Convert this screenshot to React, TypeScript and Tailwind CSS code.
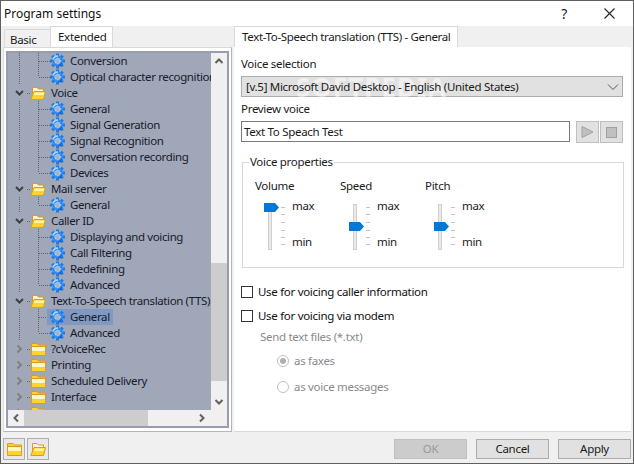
import type { ReactNode } from 'react';

type TreeItem = {
  label: string;
  level: 0 | 1;
  open?: boolean;
  last?: boolean;
  selected?: boolean;
};

const treeItems: TreeItem[] = [
  { label: 'Conversion', level: 1 },
  { label: 'Optical character recognition', level: 1, last: true },
  { label: 'Voice', level: 0, open: true },
  { label: 'General', level: 1 },
  { label: 'Signal Generation', level: 1 },
  { label: 'Signal Recognition', level: 1 },
  { label: 'Conversation recording', level: 1 },
  { label: 'Devices', level: 1, last: true },
  { label: 'Mail server', level: 0, open: true },
  { label: 'General', level: 1, last: true },
  { label: 'Caller ID', level: 0, open: true },
  { label: 'Displaying and voicing', level: 1 },
  { label: 'Call Filtering', level: 1 },
  { label: 'Redefining', level: 1 },
  { label: 'Advanced', level: 1, last: true },
  { label: 'Text-To-Speech translation (TTS)', level: 0, open: true },
  { label: 'General', level: 1, selected: true },
  { label: 'Advanced', level: 1, last: true },
  { label: '?cVoiceRec', level: 0 },
  { label: 'Printing', level: 0 },
  { label: 'Scheduled Delivery', level: 0 },
  { label: 'Interface', level: 0 },
  { label: '', level: 0 },
];

function Gear() {
  const angles = [0, 45, 90, 135, 180, 225, 270, 315];
  return (
    <svg width="15" height="16" viewBox="0 0 15 16" className="shrink-0">
      {angles.map((a) => (
        <rect key={a} x="6" y="0.5" width="3" height="3.5" fill="#1f7ae6" transform={`rotate(${a} 7.5 8)`} />
      ))}
      <circle cx="7.5" cy="8" r="5.4" fill="#2f8df0" />
      <path d="M3 6.5A5 5 0 0 1 8 3" stroke="#a8dcff" strokeWidth="1.4" fill="none" />
      <path d="M12 10A5 5 0 0 1 8 13" stroke="#0f5fc4" strokeWidth="1.2" fill="none" />
      <circle cx="7.5" cy="8" r="2.8" fill="#aab4c8" stroke="#dbe9fb" strokeWidth="1" strokeDasharray="1 1" />
    </svg>
  );
}

function FolderOpen() {
  return (
    <svg width="16" height="16" viewBox="0 0 16 16" className="shrink-0 -ml-px">
      <path d="M2.5 14V2.5h4.5l1.5 1.5h5v4" fill="#fff6d0" stroke="#e09a1a" />
      <path d="M4 6.5h11.5L13.5 14.5H.8z" fill="#ffd32e" stroke="#e09a1a" />
      <path d="M4.6 7.5h9.6l-.6 2.5H3.6z" fill="#fff3a8" />
    </svg>
  );
}

function FolderClosed() {
  return (
    <svg width="15" height="16" viewBox="0 0 15 16" className="shrink-0">
      <path d="M.5 14.5V2.5h5.5l1.5 1.5h7v10.5z" fill="#ffd32e" stroke="#e09a1a" />
      <path d="M1 6h13v4H1z" fill="#fff6c8" />
      <path d="M1 5.5h13.5" stroke="#e09a1a" />
    </svg>
  );
}

function TreeRow({ item }: { item: TreeItem }) {
  if (item.level === 0) {
    return (
      <div className="flex h-4 items-center whitespace-nowrap">
        <svg width="23" height="16" viewBox="0 0 23 16" className="shrink-0">
          {item.open ? (
            <path d="M8 6l3.5 3.5L15 6" stroke="#404040" strokeWidth="2" fill="none" />
          ) : (
            <path d="M9.5 4.5L13 8l-3.5 3.5" stroke="#808080" strokeWidth="2" fill="none" />
          )}
          <path d="M19 8.5h4" stroke="#5c6270" strokeDasharray="1 1" />
        </svg>
        {item.open ? <FolderOpen /> : <FolderClosed />}
        <span className="ml-[5px]">{item.label}</span>
      </div>
    );
  }
  return (
    <div className="flex h-4 items-center whitespace-nowrap">
      <svg width="42" height="16" viewBox="0 0 42 16" className="shrink-0">
        <path d="M11.5 0v16" stroke="#5c6270" strokeDasharray="1 1" />
        <path d={item.last ? 'M30.5 0v8' : 'M30.5 0v16'} stroke="#5c6270" strokeDasharray="1 1" />
        <path d="M31 8.5h11" stroke="#5c6270" strokeDasharray="1 1" />
      </svg>
      <div className={item.selected ? 'flex h-4 items-center -ml-[3px] pl-[3px] pr-[3px] bg-[#7f99c2]' : 'flex h-4 items-center'}>
        <Gear />
        <span className="ml-[5px]">{item.label}</span>
      </div>
    </div>
  );
}

function Chevron({ d }: { d: string }) {
  return (
    <svg width="16" height="16" viewBox="0 0 16 16" className="shrink-0">
      <path d={d} stroke="#606060" strokeWidth="2" fill="none" />
    </svg>
  );
}

function Tree() {
  return (
    <div className="flex flex-col ml-[2px] mr-[2px] mt-[3px] h-[377px] border-2 border-[#979daf] text-[#171b2a] tracking-[-0.38px]">
      <div className="flex h-[357px]">
        <div className="w-[203px] bg-[#a0a7b8] overflow-hidden">
          {treeItems.map((item, i) => (
            <TreeRow key={i} item={item} />
          ))}
        </div>
        <div className="w-4 flex flex-col bg-[#f0f0f0]">
          <Chevron d="M4.5 10L8 6.5l3.5 3.5" />
          <div className="h-[194px]" />
          <div className="h-[118px] bg-[#cdcdcd]" />
          <div className="flex-1" />
          <Chevron d="M4.5 6L8 9.5 11.5 6" />
        </div>
      </div>
      <div className="flex h-4 bg-[#f0f0f0]">
        <Chevron d="M10 4.5L6.5 8l3.5 3.5" />
        <div className="w-[124px] bg-[#cdcdcd]" />
        <div className="w-[46px]" />
        <Chevron d="M6 4.5L9.5 8 6 11.5" />
      </div>
    </div>
  );
}

function LeftPanel() {
  return (
    <div className="w-[233px] flex flex-col shrink-0">
      <div className="flex items-end h-[21px] pl-[3px]">
        <div className="w-[47px] h-[18px] bg-[#f0f0f0] border border-b-0 border-[#d9d9d9] flex items-center pl-[5px] pt-[2px]">Basic</div>
        <div className="w-[63px] h-[21px] bg-white border border-b-0 border-[#d9d9d9] -ml-px flex items-center pl-[7px]">Extended</div>
      </div>
      <div className="ml-[2px] w-[229px] h-[385px] bg-white border border-[#d9d9d9] border-r-[#b4b4b4] border-b-[#b4b4b4]">
        <Tree />
      </div>
    </div>
  );
}

function Slider({ label, top }: { label: string; top: boolean }) {
  const ticks = [4, 11, 19, 27, 34, 41];
  return (
    <div className="w-[85px] flex flex-col">
      <div className="h-4 flex items-center leading-4">{label}</div>
      <div className="flex ml-[9px] mt-[9px] h-[50px]">
        <svg width="24" height="50" viewBox="0 0 24 50" className="shrink-0">
          <rect x="4.5" y="1.5" width="3" height="45" fill="#e7eaea" stroke="#d0d0d0" />
          {ticks.map((t) => (
            <rect key={t} x="17" y={t} width="4" height="1" fill="#c4c4c4" />
          ))}
          <path d={top ? 'M0 0h11l4 4.5-4 4.5H0z' : 'M0 19h11l4 4.5-4 4.5H0z'} fill="#0078d7" />
        </svg>
        <div className="ml-[4px] -mt-[5px] h-[52px] flex flex-col justify-between leading-4">
          <span>max</span>
          <span>min</span>
        </div>
      </div>
    </div>
  );
}

function Check({ children }: { children: ReactNode }) {
  return (
    <div className="flex items-center h-[14px] gap-[5px] text-[#111]">
      <div className="w-3 h-3 border border-[#333] bg-white shrink-0" />
      <span>{children}</span>
    </div>
  );
}

function Radio({ checked, children }: { checked?: boolean; children: ReactNode }) {
  return (
    <div className="flex items-center h-[14px] gap-[5px] ml-[36px] text-[#8a8a8a]">
      <div className="w-3 h-3 rounded-full border border-[#bfbfbf] flex items-center justify-center shrink-0">
        {checked && <div className="w-[6px] h-[6px] rounded-full bg-[#b0b0b0]" />}
      </div>
      <span>{children}</span>
    </div>
  );
}

function RightPanel() {
  return (
    <div className="flex-1 flex flex-col">
      <div className="h-[21px] flex">
        <div className="w-[224px] h-[21px] bg-white border-l border-t border-r border-[#d9d9d9] flex items-center pl-[7px] whitespace-nowrap tracking-[-0.35px]">
          Text-To-Speech translation (TTS) - General
        </div>
      </div>
      <div className="w-[397px] h-[385px] bg-white border-b border-[#d9d9d9] pl-[7px] pr-[8px] pt-[9px] flex flex-col">
        <div className="h-4 leading-4">Voice selection</div>
        <div className="relative mt-[4px] h-[21px] w-[382px] bg-[#e1e1e1] border border-[#adadad] flex items-center pl-[4px]">
          <div className="absolute left-[54px] -top-[3px] text-[26px] font-bold leading-[26px] tracking-[1px] text-white/50 pointer-events-none">
            SOFTPEDIA
          </div>
          <span className="relative">[v.5] Microsoft David Desktop - English (United States)</span>
          <svg width="12" height="8" viewBox="0 0 12 8" className="ml-auto mr-[3px]">
            <path d="M1 1.5l5 5 5-5" stroke="#555" fill="none" />
          </svg>
        </div>
        <div className="h-4 leading-4 mt-[4px]">Preview voice</div>
        <div className="flex mt-[4px] h-[22px]">
          <div className="w-[329px] h-[21px] border border-[#7a7a7a] flex items-center pl-[2px]">Text To Speach Test</div>
          <div className="ml-[6px] w-[23px] h-[22px] bg-[#e1e1e1] border border-[#bfbfbf] flex items-center justify-center">
            <svg width="13" height="12" viewBox="0 0 13 12">
              <path d="M1 .5l11 5.5-11 5.5z" fill="#c0c0c0" stroke="#a0a0a0" />
            </svg>
          </div>
          <div className="ml-px w-[23px] h-[22px] bg-[#e1e1e1] border border-[#bfbfbf] flex items-center justify-center">
            <div className="w-[11px] h-[11px] bg-[#c0c0c0] border border-[#a0a0a0]" />
          </div>
        </div>
        <div className="relative mt-[19px] ml-px w-[382px] h-[106px] border border-[#d9d9d9] pl-[12px] pt-[15px] flex">
          <div className="absolute -top-[8px] left-[6px] bg-white px-px leading-[14px]">Voice properties</div>
          <Slider label="Volume" top />
          <Slider label="Speed" top={false} />
          <Slider label="Pitch" top={false} />
        </div>
        <div className="mt-[17px]">
          <Check>Use for voicing caller information</Check>
        </div>
        <div className="mt-[10px]">
          <Check>Use for voicing via modem</Check>
        </div>
        <div className="ml-[19px] mt-[6px] h-4 leading-4 text-[#8a8a8a]">Send text files (*.txt)</div>
        <div className="mt-[9px]">
          <Radio checked>as faxes</Radio>
        </div>
        <div className="mt-3">
          <Radio>as voice messages</Radio>
        </div>
      </div>
    </div>
  );
}

function Footer() {
  return (
    <div className="h-[30px] flex items-center pl-[2px] pt-[4px]">
      <div className="w-[22px] h-[22px] border border-[#adadad] bg-[#e8e8e8] flex items-center justify-center">
        <FolderClosed />
      </div>
      <div className="ml-[2px] w-[22px] h-[22px] border border-[#adadad] bg-[#e8e8e8] flex items-center justify-center">
        <FolderOpen />
      </div>
      <div className="ml-auto w-[73px] h-[20px] bg-[#cccccc] border border-[#bfbfbf] text-[#9a9a9a] flex items-center justify-center">OK</div>
      <div className="ml-[9px] w-[73px] h-[20px] bg-[#e1e1e1] border border-[#adadad] flex items-center justify-center">Cancel</div>
      <div className="ml-[9px] mr-[2px] w-[73px] h-[20px] bg-[#e1e1e1] border border-[#adadad] flex items-center justify-center">Apply</div>
    </div>
  );
}

export default function App() {
  return (
    <div className="w-[634px] h-[464px] overflow-hidden bg-[#f0f0f0] border border-[#5f5f5f] text-[11.5px] tracking-[-0.3px] leading-4 text-[#1a1a1a] font-['Noto_Sans',sans-serif] flex flex-col">
      {/* Title bar */}
      <div className="h-[25px] bg-white flex items-center pl-[3px] shrink-0">
        <span className="text-[12px] tracking-normal text-[#111]">Program settings</span>
        <span className="ml-auto mr-[36px] text-[14px]">?</span>
        <svg width="13" height="13" viewBox="0 0 13 13" className="mr-[17px]">
          <path d="M1.5 1.5l10 10M11.5 1.5l-10 10" stroke="#222" strokeWidth="1.1" />
        </svg>
      </div>
      <div className="flex shrink-0">
        <LeftPanel />
        <RightPanel />
      </div>
      <Footer />
    </div>
  );
}
